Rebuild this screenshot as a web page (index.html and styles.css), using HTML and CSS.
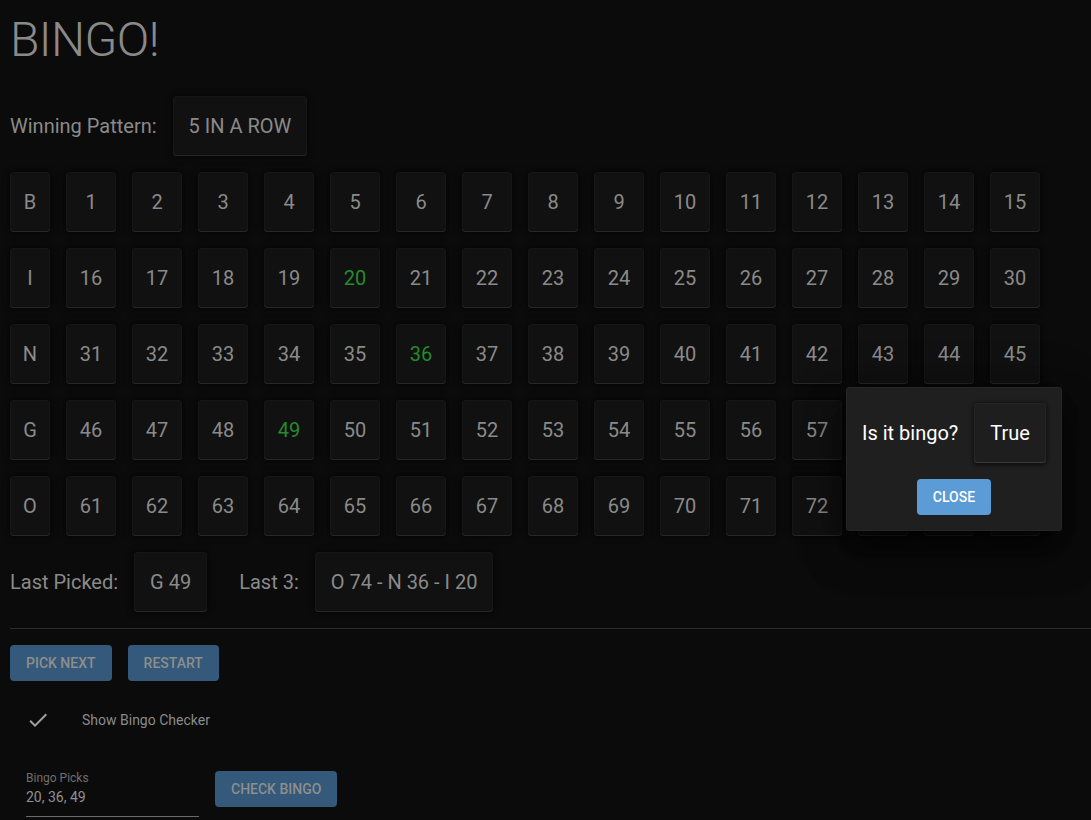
FILE: index.html
```html
<!DOCTYPE html>
<html>
<head>
<meta charset="utf-8">
<link rel="stylesheet" href="styles.css">
</head>
<body>
<div class="app">
  <h1 class="title">BINGO!</h1>
  <div class="pattern-row">
    <span class="label">Winning Pattern:</span>
    <div class="chip">5 IN A ROW</div>
  </div>
  <div class="board">
    <div class="tile letter">B</div><div class="tile">1</div><div class="tile">2</div><div class="tile">3</div><div class="tile">4</div><div class="tile">5</div><div class="tile">6</div><div class="tile">7</div><div class="tile">8</div><div class="tile">9</div><div class="tile">10</div><div class="tile">11</div><div class="tile">12</div><div class="tile">13</div><div class="tile">14</div><div class="tile">15</div>
    <div class="tile letter">I</div><div class="tile">16</div><div class="tile">17</div><div class="tile">18</div><div class="tile">19</div><div class="tile picked">20</div><div class="tile">21</div><div class="tile">22</div><div class="tile">23</div><div class="tile">24</div><div class="tile">25</div><div class="tile">26</div><div class="tile">27</div><div class="tile">28</div><div class="tile">29</div><div class="tile">30</div>
    <div class="tile letter">N</div><div class="tile">31</div><div class="tile">32</div><div class="tile">33</div><div class="tile">34</div><div class="tile">35</div><div class="tile picked">36</div><div class="tile">37</div><div class="tile">38</div><div class="tile">39</div><div class="tile">40</div><div class="tile">41</div><div class="tile">42</div><div class="tile">43</div><div class="tile">44</div><div class="tile">45</div>
    <div class="tile letter">G</div><div class="tile">46</div><div class="tile">47</div><div class="tile">48</div><div class="tile picked">49</div><div class="tile">50</div><div class="tile">51</div><div class="tile">52</div><div class="tile">53</div><div class="tile">54</div><div class="tile">55</div><div class="tile">56</div><div class="tile">57</div><div class="tile">58</div><div class="tile">59</div><div class="tile">60</div>
    <div class="tile letter">O</div><div class="tile">61</div><div class="tile">62</div><div class="tile">63</div><div class="tile">64</div><div class="tile">65</div><div class="tile">66</div><div class="tile">67</div><div class="tile">68</div><div class="tile">69</div><div class="tile">70</div><div class="tile">71</div><div class="tile">72</div><div class="tile">73</div><div class="tile picked">74</div><div class="tile">75</div>
  </div>
  <div class="last-row">
    <span class="label">Last Picked:</span>
    <div class="chip">G 49</div>
    <span class="label last3">Last 3:</span>
    <div class="chip">O 74 - N 36 - I 20</div>
  </div>
  <hr class="divider">
  <div class="actions">
    <button class="btn">PICK NEXT</button>
    <button class="btn">RESTART</button>
  </div>
  <div class="check-row">
    <svg class="check-icon" width="24" height="24" viewBox="0 0 24 24"><path d="M9 16.17L4.83 12l-1.42 1.41L9 19 21 7l-1.41-1.41z" fill="currentColor"/></svg>
    <span class="check-label">Show Bingo Checker</span>
  </div>
  <div class="checker-row">
    <div class="field">
      <div class="field-label">Bingo Picks</div>
      <div class="field-value">20, 36, 49</div>
    </div>
    <button class="btn">CHECK BINGO</button>
  </div>
</div>
<div class="dialog">
  <div class="dialog-row">
    <span class="dialog-text">Is it bingo?</span>
    <div class="chip dialog-chip">True</div>
  </div>
  <div class="dialog-actions">
    <button class="btn btn-primary">CLOSE</button>
  </div>
</div>
</body>
</html>
```

FILE: styles.css
```css
html, body {
  margin: 0;
  padding: 0;
  background: #0b0b0b;
  height: 100%;
  overflow: hidden;
}
body {
  font-family: Roboto, "Liberation Sans", sans-serif;
  color: #8a8a8a;
}
.app {
  padding: 10px 0 0 10px;
}
.title {
  margin: 0;
  font-size: 48px;
  font-weight: 300;
  line-height: 60px;
  letter-spacing: -0.6px;
  color: #8a8a8a;
}
.label {
  font-size: 20px;
  color: #8a8a8a;
}
.pattern-row {
  margin-top: 26px;
  display: flex;
  align-items: center;
  gap: 16px;
}
.chip {
  height: 60px;
  box-sizing: border-box;
  padding: 0 16px;
  display: flex;
  align-items: center;
  justify-content: center;
  background: #111111;
  border-radius: 4px;
  font-size: 20px;
  color: #8a8a8a;
  box-shadow: 0 0 6px 1px rgba(0,0,0,0.6), inset 0 -1px 0 #282828, inset 0 0 0 1px #161616;
}
.board {
  margin-top: 16px;
  display: grid;
  grid-template-columns: 40px repeat(15, 50px);
  grid-auto-rows: 60px;
  gap: 16px;
}
.tile {
  display: flex;
  align-items: center;
  justify-content: center;
  background: #111111;
  border-radius: 4px;
  font-size: 20px;
  color: #8a8a8a;
  box-shadow: 0 0 6px 1px rgba(0,0,0,0.6), inset 0 -1px 0 #282828, inset 0 0 0 1px #161616;
}
.tile.picked {
  color: #258a2e;
}
.last-row {
  margin-top: 16px;
  display: flex;
  align-items: center;
  gap: 16px;
}
.last3 {
  margin-left: 16px;
}
.divider {
  margin: 16px 0 0 0;
  border: 0;
  height: 1px;
  background: #2c2c2c;
}
.actions {
  margin-top: 16px;
  display: flex;
  gap: 16px;
}
.btn {
  height: 36px;
  padding: 0 16px;
  border: 0;
  border-radius: 4px;
  background: #34597a;
  color: #8e8e8e;
  font-family: Roboto, "Liberation Sans", sans-serif;
  font-size: 14px;
  font-weight: 500;
  letter-spacing: 0;
  cursor: pointer;
}
.check-row {
  margin-top: 19px;
  height: 40px;
  display: flex;
  align-items: center;
  padding-left: 16px;
}
.check-icon {
  color: #a0a0a0;
  display: block;
}
.check-label {
  margin-left: 32px;
  font-size: 14px;
  color: #8a8a8a;
}
.checker-row {
  margin-top: 31px;
  display: flex;
  align-items: flex-start;
  padding-left: 16px;
  gap: 16px;
}
.field {
  width: 173px;
  border-bottom: 1px solid #6a6a6a;
  height: 46px;
  box-sizing: border-box;
  padding-top: 0;
}
.field-label {
  font-size: 12px;
  line-height: 14px;
  color: #6f6f6f;
}
.field-value {
  font-size: 14px;
  line-height: 20px;
  margin-top: 2px;
  color: #909090;
}
.dialog {
  position: absolute;
  left: 846px;
  top: 387px;
  width: 216px;
  box-sizing: border-box;
  padding: 16px;
  background: #1f1f1f;
  border-radius: 4px;
  box-shadow: 0 11px 15px -7px rgba(0,0,0,0.5), 0 24px 38px 3px rgba(0,0,0,0.35), 0 9px 46px 8px rgba(0,0,0,0.3), inset 0 0 0 1px #262626;
}
.dialog-row {
  display: flex;
  align-items: center;
  gap: 16px;
}
.dialog-text {
  font-size: 20px;
  color: #ffffff;
}
.dialog-chip {
  background: #1e1e1e;
  color: #ffffff;
  box-shadow: 0 1px 4px 1px rgba(0,0,0,0.6), inset 0 -1px 0 #3a3a3a, inset 0 0 0 1px #252525;
}
.dialog-actions {
  margin-top: 16px;
  display: flex;
  justify-content: center;
}
.btn-primary {
  background: #5b9bd6;
  color: #ffffff;
}
```
